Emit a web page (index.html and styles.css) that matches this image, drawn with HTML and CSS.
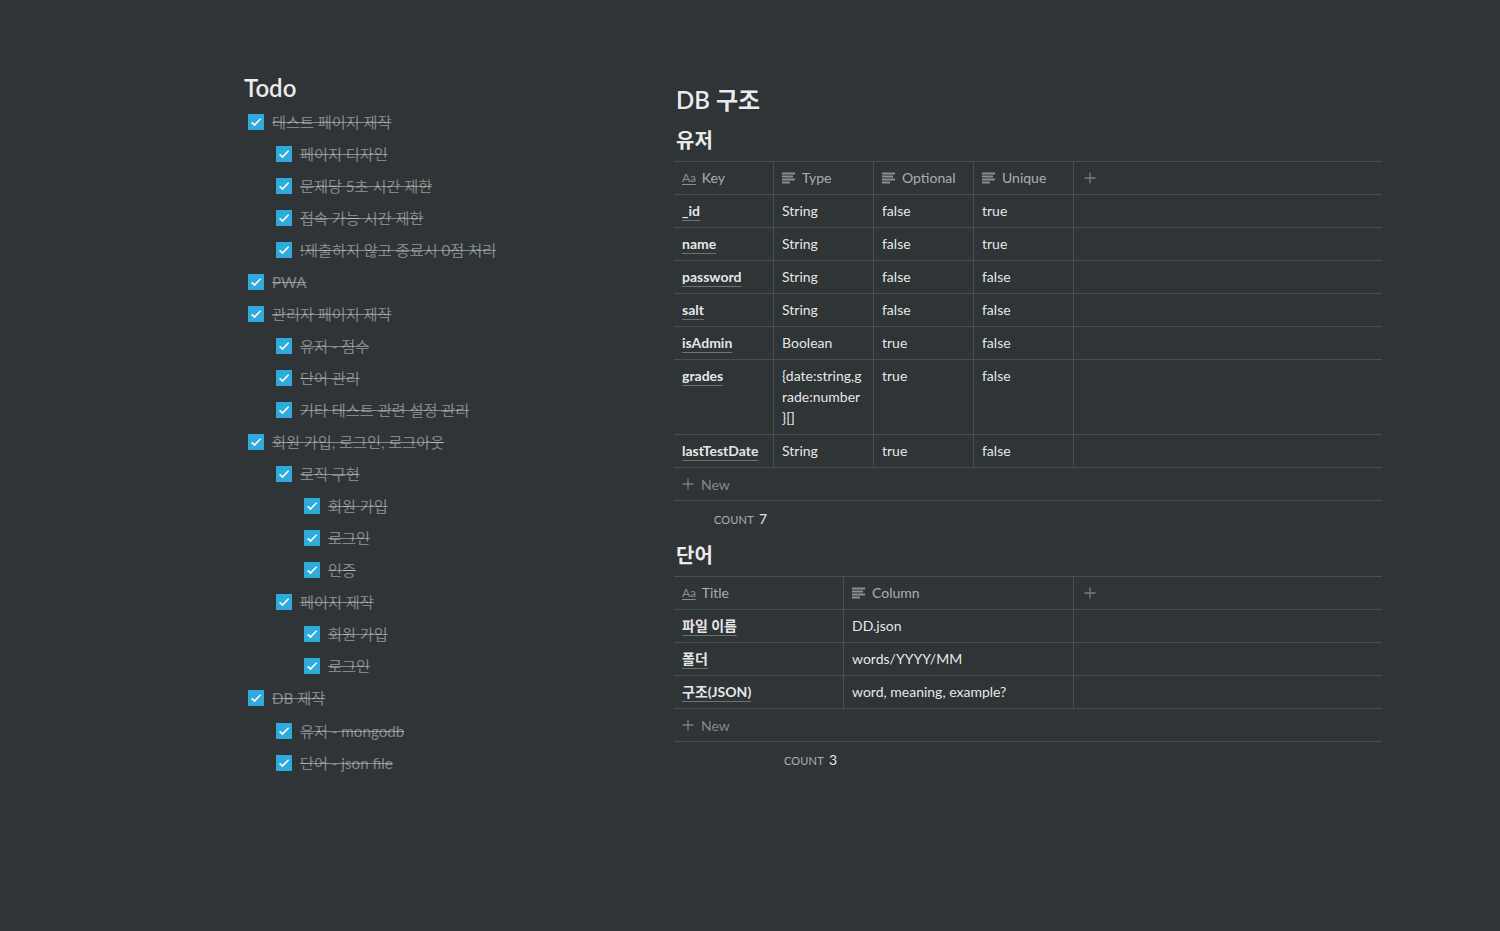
FILE: index.html
```html
<!DOCTYPE html>
<html lang="ko">
<head>
<meta charset="utf-8">
<title>Todo / DB 구조</title>
<link rel="stylesheet" href="styles.css">
</head>
<body>
<div class="page">
  <div class="col-left">
    <h2 class="h2 h2-todo">Todo</h2>
    <div class="todo">
      <div class="todo-row"><span class="cb"><svg viewBox="0 0 16 16" width="16" height="16"><path d="M3.6 8.2 6.4 11 12.6 4.8" /></svg></span><span class="todo-text">테스트 페이지 제작</span></div>
      <div class="children">
        <div class="todo-row"><span class="cb"><svg viewBox="0 0 16 16" width="16" height="16"><path d="M3.6 8.2 6.4 11 12.6 4.8" /></svg></span><span class="todo-text">페이지 디자인</span></div>
        <div class="todo-row"><span class="cb"><svg viewBox="0 0 16 16" width="16" height="16"><path d="M3.6 8.2 6.4 11 12.6 4.8" /></svg></span><span class="todo-text">문제당 5초 시간 제한</span></div>
        <div class="todo-row"><span class="cb"><svg viewBox="0 0 16 16" width="16" height="16"><path d="M3.6 8.2 6.4 11 12.6 4.8" /></svg></span><span class="todo-text">접속 가능 시간 제한</span></div>
        <div class="todo-row"><span class="cb"><svg viewBox="0 0 16 16" width="16" height="16"><path d="M3.6 8.2 6.4 11 12.6 4.8" /></svg></span><span class="todo-text">!제출하지 않고 종료시 0점 처리</span></div>
      </div>
    </div>
    <div class="todo">
      <div class="todo-row"><span class="cb"><svg viewBox="0 0 16 16" width="16" height="16"><path d="M3.6 8.2 6.4 11 12.6 4.8" /></svg></span><span class="todo-text">PWA</span></div>
    </div>
    <div class="todo">
      <div class="todo-row"><span class="cb"><svg viewBox="0 0 16 16" width="16" height="16"><path d="M3.6 8.2 6.4 11 12.6 4.8" /></svg></span><span class="todo-text">관리자 페이지 제작</span></div>
      <div class="children">
        <div class="todo-row"><span class="cb"><svg viewBox="0 0 16 16" width="16" height="16"><path d="M3.6 8.2 6.4 11 12.6 4.8" /></svg></span><span class="todo-text">유저 - 점수</span></div>
        <div class="todo-row"><span class="cb"><svg viewBox="0 0 16 16" width="16" height="16"><path d="M3.6 8.2 6.4 11 12.6 4.8" /></svg></span><span class="todo-text">단어 관리</span></div>
        <div class="todo-row"><span class="cb"><svg viewBox="0 0 16 16" width="16" height="16"><path d="M3.6 8.2 6.4 11 12.6 4.8" /></svg></span><span class="todo-text">기타 테스트 관련 설정 관리</span></div>
      </div>
    </div>
    <div class="todo">
      <div class="todo-row"><span class="cb"><svg viewBox="0 0 16 16" width="16" height="16"><path d="M3.6 8.2 6.4 11 12.6 4.8" /></svg></span><span class="todo-text">회원 가입, 로그인, 로그아웃</span></div>
      <div class="children">
        <div class="todo-row"><span class="cb"><svg viewBox="0 0 16 16" width="16" height="16"><path d="M3.6 8.2 6.4 11 12.6 4.8" /></svg></span><span class="todo-text">로직 구현</span></div>
        <div class="children">
          <div class="todo-row"><span class="cb"><svg viewBox="0 0 16 16" width="16" height="16"><path d="M3.6 8.2 6.4 11 12.6 4.8" /></svg></span><span class="todo-text">회원 가입</span></div>
          <div class="todo-row"><span class="cb"><svg viewBox="0 0 16 16" width="16" height="16"><path d="M3.6 8.2 6.4 11 12.6 4.8" /></svg></span><span class="todo-text">로그인</span></div>
          <div class="todo-row"><span class="cb"><svg viewBox="0 0 16 16" width="16" height="16"><path d="M3.6 8.2 6.4 11 12.6 4.8" /></svg></span><span class="todo-text">인증</span></div>
        </div>
        <div class="todo-row"><span class="cb"><svg viewBox="0 0 16 16" width="16" height="16"><path d="M3.6 8.2 6.4 11 12.6 4.8" /></svg></span><span class="todo-text">페이지 제작</span></div>
        <div class="children">
          <div class="todo-row"><span class="cb"><svg viewBox="0 0 16 16" width="16" height="16"><path d="M3.6 8.2 6.4 11 12.6 4.8" /></svg></span><span class="todo-text">회원 가입</span></div>
          <div class="todo-row"><span class="cb"><svg viewBox="0 0 16 16" width="16" height="16"><path d="M3.6 8.2 6.4 11 12.6 4.8" /></svg></span><span class="todo-text">로그인</span></div>
        </div>
      </div>
    </div>
    <div class="todo">
      <div class="todo-row"><span class="cb"><svg viewBox="0 0 16 16" width="16" height="16"><path d="M3.6 8.2 6.4 11 12.6 4.8" /></svg></span><span class="todo-text">DB 제작</span></div>
      <div class="children children-gap">
        <div class="todo-row"><span class="cb"><svg viewBox="0 0 16 16" width="16" height="16"><path d="M3.6 8.2 6.4 11 12.6 4.8" /></svg></span><span class="todo-text">유저 - mongodb</span></div>
        <div class="todo-row"><span class="cb"><svg viewBox="0 0 16 16" width="16" height="16"><path d="M3.6 8.2 6.4 11 12.6 4.8" /></svg></span><span class="todo-text">단어 - json file</span></div>
      </div>
    </div>
  </div>

  <div class="col-right">
    <h2 class="h2 h2-db">DB 구조</h2>
    <h3 class="h3">유저</h3>
    <div class="db">
      <div class="tr th">
        <div class="td w100"><span class="icon-title">Aa</span>Key</div>
        <div class="td w100"><svg class="icon-text" viewBox="0 0 14 14" width="14" height="14"><rect x="0" y="1.5" width="13" height="2"/><rect x="0" y="4.5" width="11" height="2"/><rect x="0" y="7.5" width="13" height="2"/><rect x="0" y="10.5" width="8" height="2"/></svg>Type</div>
        <div class="td w100"><svg class="icon-text" viewBox="0 0 14 14" width="14" height="14"><rect x="0" y="1.5" width="13" height="2"/><rect x="0" y="4.5" width="11" height="2"/><rect x="0" y="7.5" width="13" height="2"/><rect x="0" y="10.5" width="8" height="2"/></svg>Optional</div>
        <div class="td w100"><svg class="icon-text" viewBox="0 0 14 14" width="14" height="14"><rect x="0" y="1.5" width="13" height="2"/><rect x="0" y="4.5" width="11" height="2"/><rect x="0" y="7.5" width="13" height="2"/><rect x="0" y="10.5" width="8" height="2"/></svg>Unique</div>
        <div class="td add"><svg class="icon-plus" viewBox="0 0 12 12" width="12" height="12"><path d="M6 0.5v11M0.5 6h11"/></svg></div>
      </div>
      <div class="tr"><div class="td w100"><span class="key">_id</span></div><div class="td w100">String</div><div class="td w100">false</div><div class="td w100">true</div><div class="td add"></div></div>
      <div class="tr"><div class="td w100"><span class="key">name</span></div><div class="td w100">String</div><div class="td w100">false</div><div class="td w100">true</div><div class="td add"></div></div>
      <div class="tr"><div class="td w100"><span class="key">password</span></div><div class="td w100">String</div><div class="td w100">false</div><div class="td w100">false</div><div class="td add"></div></div>
      <div class="tr"><div class="td w100"><span class="key">salt</span></div><div class="td w100">String</div><div class="td w100">false</div><div class="td w100">false</div><div class="td add"></div></div>
      <div class="tr"><div class="td w100"><span class="key">isAdmin</span></div><div class="td w100">Boolean</div><div class="td w100">true</div><div class="td w100">false</div><div class="td add"></div></div>
      <div class="tr"><div class="td w100"><span class="key">grades</span></div><div class="td w100 wrap">{date:string,g<wbr>rade:number<wbr><span class="nobr">}[]</span></div><div class="td w100">true</div><div class="td w100">false</div><div class="td add"></div></div>
      <div class="tr"><div class="td w100"><span class="key">lastTestDate</span></div><div class="td w100">String</div><div class="td w100">true</div><div class="td w100">false</div><div class="td add"></div></div>
      <div class="tr new"><svg class="icon-plus" viewBox="0 0 12 12" width="12" height="12"><path d="M6 0.5v11M0.5 6h11"/></svg><span>New</span></div>
      <div class="count-row"><div class="count w100"><span class="count-label">Count</span><span class="count-num">7</span></div></div>
    </div>

    <h3 class="h3 h3-words">단어</h3>
    <div class="db">
      <div class="tr th">
        <div class="td w170"><span class="icon-title">Aa</span>Title</div>
        <div class="td w230"><svg class="icon-text" viewBox="0 0 14 14" width="14" height="14"><rect x="0" y="1.5" width="13" height="2"/><rect x="0" y="4.5" width="11" height="2"/><rect x="0" y="7.5" width="13" height="2"/><rect x="0" y="10.5" width="8" height="2"/></svg>Column</div>
        <div class="td add"><svg class="icon-plus" viewBox="0 0 12 12" width="12" height="12"><path d="M6 0.5v11M0.5 6h11"/></svg></div>
      </div>
      <div class="tr"><div class="td w170"><span class="key">파일 이름</span></div><div class="td w230">DD.json</div><div class="td add"></div></div>
      <div class="tr"><div class="td w170"><span class="key">폴더</span></div><div class="td w230">words/YYYY/MM</div><div class="td add"></div></div>
      <div class="tr"><div class="td w170"><span class="key">구조(JSON)</span></div><div class="td w230">word, meaning, example?</div><div class="td add"></div></div>
      <div class="tr new"><svg class="icon-plus" viewBox="0 0 12 12" width="12" height="12"><path d="M6 0.5v11M0.5 6h11"/></svg><span>New</span></div>
      <div class="count-row"><div class="count w170"><span class="count-label">Count</span><span class="count-num">3</span></div></div>
    </div>
  </div>
</div>
</body>
</html>
```

FILE: styles.css
```css
:root {
  --line: rgba(255, 255, 255, 0.13);
  --text: rgba(255, 255, 255, 0.9);
  --muted: rgba(255, 255, 255, 0.6);
  --faint: rgba(255, 255, 255, 0.42);
}

html, body {
  margin: 0;
  background: #2f3437;
}

body {
  font-family: Lato, "Noto Sans CJK KR", sans-serif;
  color: var(--text);
  min-height: 931px;
}

.page {
  display: flex;
  padding: 72px 0 0 244px;
}

.col-left {
  width: 430px;
  flex: none;
}

.col-right {
  width: 708px;
  flex: none;
  padding-top: 12px;
}

.h2 {
  margin: 0 0 1px;
  font-size: 24px;
  line-height: 31px;
  font-weight: 600;
  color: rgba(255, 255, 255, 0.92);
}

.h2-todo {
  margin-bottom: 3px;
}

.h2-db {
  padding-left: 2px;
  margin-bottom: 12px;
}

.h3 {
  margin: 0 0 8px;
  padding-left: 2px;
  font-size: 20px;
  line-height: 26px;
  font-weight: 700;
  color: rgba(255, 255, 255, 0.92);
}

.h3-words {
  margin-top: 7px;
  margin-bottom: 8px;
}

/* Todo list */
.todo-row {
  display: flex;
  align-items: center;
  height: 32px;
  padding-left: 4px;
}

.children {
  padding-left: 28px;
}

.children-gap {
  padding-top: 1px;
}

.cb {
  width: 16px;
  height: 16px;
  flex: none;
  margin-right: 8px;
  background: #2eaadc;
  display: flex;
}

.cb svg {
  fill: none;
  stroke: #fff;
  stroke-width: 1.6;
}

.todo-text {
  font-size: 15.2px;
  line-height: 24px;
  color: var(--faint);
  text-decoration: line-through;
  text-decoration-color: rgba(255, 255, 255, 0.42);
  white-space: nowrap;
}

/* Database tables */
.db {
  border-top: 1px solid var(--line);
  font-size: 14px;
}

.tr {
  display: flex;
  border-bottom: 1px solid var(--line);
}

.td {
  box-sizing: border-box;
  flex: none;
  padding: 5px 8px 6px;
  line-height: 21px;
  border-right: 1px solid var(--line);
  white-space: nowrap;
}

.w100 { width: 100px; }
.w170 { width: 170px; }
.w230 { width: 230px; }

.td.add {
  flex: 1;
  border-right: none;
  display: flex;
  align-items: center;
  padding-left: 10px;
}

.td.wrap {
  white-space: normal;
}

.nobr {
  white-space: nowrap;
}

.th .td {
  color: var(--muted);
  display: flex;
  align-items: center;
}

.icon-title {
  font-size: 12px;
  line-height: 13px;
  margin-right: 6px;
  color: rgba(255, 255, 255, 0.45);
  text-decoration: underline;
  text-underline-offset: 2px;
  letter-spacing: -0.2px;
}

.icon-text {
  fill: rgba(255, 255, 255, 0.45);
  margin-right: 6px;
  flex: none;
}

.icon-plus {
  stroke: rgba(255, 255, 255, 0.35);
  stroke-width: 1.3;
  fill: none;
  flex: none;
}

.key {
  font-weight: 700;
  text-decoration: underline;
  text-decoration-color: rgba(255, 255, 255, 0.3);
  text-underline-offset: 4px;
  text-decoration-thickness: 1px;
}

.tr.new {
  height: 32px;
  align-items: center;
  padding-left: 8px;
  color: var(--faint);
}

.tr.new .icon-plus {
  margin-right: 7px;
}

.count-row {
  display: flex;
  height: 34px;
  align-items: center;
}

.count {
  box-sizing: border-box;
  padding-right: 7px;
  text-align: right;
  white-space: nowrap;
}

.count-label {
  font-size: 11px;
  text-transform: uppercase;
  letter-spacing: 0.2px;
  color: var(--muted);
  margin-right: 5px;
}

.count-num {
  font-size: 14px;
  color: var(--text);
}
```
